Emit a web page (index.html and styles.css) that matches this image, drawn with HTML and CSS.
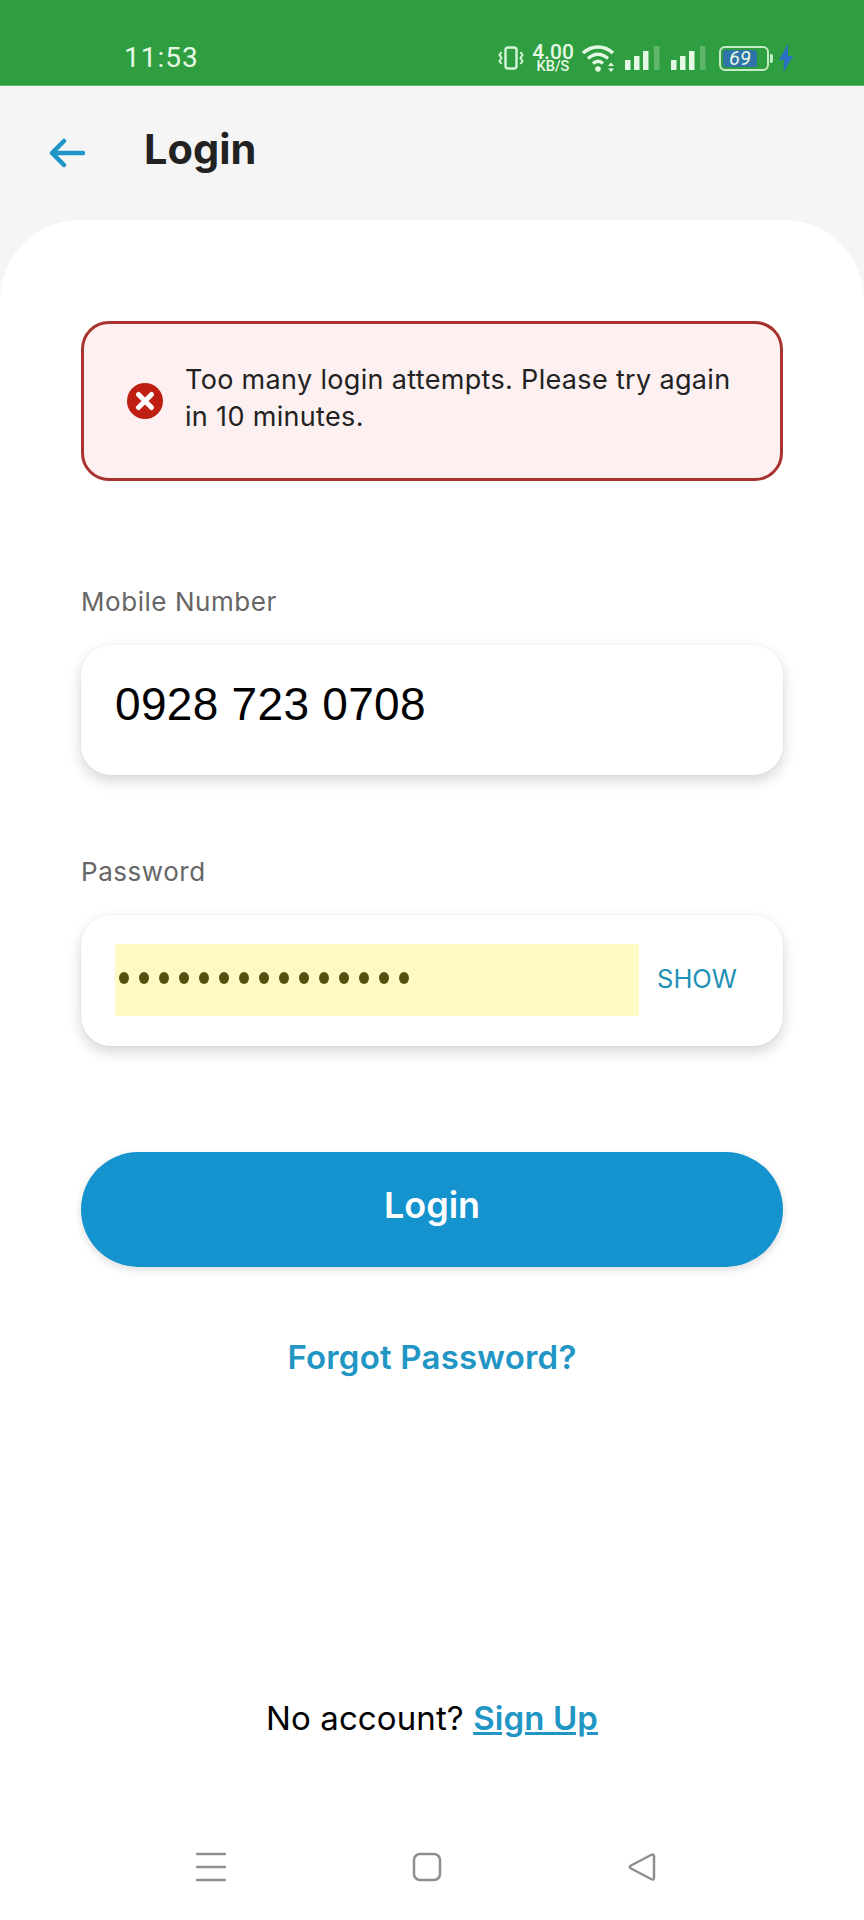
FILE: index.html
```html
<!DOCTYPE html>
<html lang="en">
<head>
<meta charset="utf-8">
<title>Login</title>
<link rel="stylesheet" href="styles.css">
</head>
<body>
<div class="app">
  <div class="statusbar">
    <span class="clock">11:53</span>
    <div class="status-icons">
      <svg class="ic-vib" viewBox="0 0 26 24"><rect x="7.500" y="1.500" width="11" height="21" rx="2.500" fill="none" stroke="#d6f5d8" stroke-width="2.400"/><path d="M3.500 6 1.500 9l2 3-2 3 2 3M22.500 6l2 3-2 3 2 3-2 3" fill="none" stroke="#d6f5d8" stroke-width="2"/></svg>
      <div class="speed"><span class="speed-num">4.00</span><span class="speed-unit">KB/S</span></div>
      <svg class="ic-wifi" viewBox="0 0 36 28"><path d="M2 9C11 1 23 1 32 9M7 14.500c6.500-5.500 13.500-5.500 20 0M12 19.500c3.500-3 6.500-3 10 0" fill="none" stroke="#e4f8e4" stroke-width="3.400"/><circle cx="17" cy="25" r="2.800" fill="#e4f8e4"/><path d="M30 18.500l3 3.500h-6zM30 28l3-3.500h-6z" fill="#e4f8e4"/></svg>
      <svg class="ic-sig" viewBox="0 0 35 24"><rect x="0" y="14" width="5.500" height="10" fill="#e4f8e4"/><rect x="9" y="10" width="5.500" height="14" fill="#e4f8e4"/><rect x="18" y="5" width="5.500" height="19" fill="#e4f8e4"/><rect x="29" y="0" width="5.500" height="24" fill="#5fb56b"/></svg>
      <svg class="ic-sig ic-sig-last" viewBox="0 0 35 24"><rect x="0" y="14" width="5.500" height="10" fill="#e4f8e4"/><rect x="9" y="10" width="5.500" height="14" fill="#e4f8e4"/><rect x="18" y="5" width="5.500" height="19" fill="#e4f8e4"/><rect x="29" y="0" width="5.500" height="24" fill="#5fb56b"/></svg>
      <div class="battery"><span class="battery-fill">69</span></div>
      <svg class="ic-bolt" viewBox="0 0 14 28"><path d="M9 0 0 16h5L4.500 28 14 12H9z" fill="#2a6fc4"/></svg>
    </div>
  </div>

  <header class="topbar">
    <svg class="back" viewBox="0 0 36 30"><path d="M34 15H4M15 3 3 15l12 12" fill="none" stroke="#2096c8" stroke-width="4.500" stroke-linecap="round" stroke-linejoin="round"/></svg>
    <h1 class="title">Login</h1>
  </header>

  <main class="card">
    <div class="alert">
      <svg class="alert-icon" viewBox="0 0 36 36"><circle cx="18" cy="18" r="18" fill="#bf1f12"/><path d="M11.500 11.500l13 13M24.500 11.500l-13 13" stroke="#fff" stroke-width="5" stroke-linecap="round"/></svg>
      <p class="alert-text">Too many login attempts. Please try again in 10 minutes.</p>
    </div>

    <label class="label label-mobile">Mobile Number</label>
    <div class="field field-phone"><span class="phone">0928 723 0708</span></div>

    <label class="label label-pass">Password</label>
    <div class="field field-pass">
      <div class="autofill">
        <span class="dots"><i></i><i></i><i></i><i></i><i></i><i></i><i></i><i></i><i></i><i></i><i></i><i></i><i></i><i></i><i></i></span>
      </div>
      <span class="show">SHOW</span>
    </div>

    <button class="btn">Login</button>
    <a class="forgot">Forgot Password?</a>

    <p class="signup">No account? <a class="signup-link">Sign Up</a></p>

    <nav class="navbar">
      <svg class="nav-menu" viewBox="0 0 30 30"><path d="M1 2h28M1 15h28M1 28h28" stroke="#8e8e8e" stroke-width="2.500" stroke-linecap="round"/></svg>
      <svg class="nav-home" viewBox="0 0 30 30"><rect x="2" y="2" width="26" height="26" rx="6" fill="none" stroke="#8e8e8e" stroke-width="2.500"/></svg>
      <svg class="nav-back" viewBox="0 0 30 30"><path d="M27 4.500v21q0 3-3 1.500L4 16.500q-2.500-1.500 0-3L24 3q3-1.500 3 1.500z" fill="none" stroke="#8e8e8e" stroke-width="2.500"/></svg>
    </nav>
  </main>
</div>
</body>
</html>
```
FILE: styles.css
```css
* { box-sizing: border-box; }
html, body { margin: 0; padding: 0; }
body { font-family: "Inter", "Noto Sans", sans-serif; background: #f5f5f6; }
.app { width: 864px; height: 1920px; display: flex; flex-direction: column; overflow: hidden; }

.statusbar { height: 86px; flex: none; background: #2f9e41; border-bottom: 1px solid #63b86f; display: flex; align-items: flex-end; padding: 0 0 11px 124px; color: #e6f8e6; }
.clock { font-family: "Roboto", sans-serif; font-size: 28px; line-height: 32px; letter-spacing: 1px; width: 374px; }
.status-icons { display: flex; align-items: center; height: 32px; }
.ic-vib { width: 26px; height: 24px; margin-right: 9px; flex: none; }
.speed { display: flex; flex-direction: column; align-items: center; width: 40px; font-family: "Roboto", sans-serif; font-weight: 500; color: #e6f8e6; margin-right: 8px; flex: none; }
.speed-num { font-size: 21px; line-height: 18px; }
.speed-unit { font-size: 14.500px; line-height: 12px; }
.ic-wifi { width: 36px; height: 28px; margin-right: 8px; flex: none; }
.ic-sig { width: 35px; height: 24px; margin-right: 11px; flex: none; }
.ic-sig-last { margin-right: 13px; }
.battery { width: 50px; height: 25px; border: 2px solid #c4ecc6; border-radius: 6px; padding: 2px; position: relative; flex: none; }
.battery::after { content: ""; position: absolute; right: -6px; top: 6px; width: 3px; height: 9px; background: #c4ecc6; border-radius: 0 2px 2px 0; }
.battery-fill { display: block; width: 34px; height: 17px; background: #2e74a8; border-radius: 3px; color: #e6f8e6; font-family: "Roboto", sans-serif; font-style: italic; font-size: 20px; line-height: 17px; text-align: center; white-space: nowrap; }
.ic-bolt { width: 14px; height: 28px; margin-left: 10px; flex: none; }

.topbar { height: 134px; flex: none; display: flex; align-items: flex-start; padding: 39px 0 0 49px; }
.back { width: 36px; height: 30px; margin-top: 13px; }
.title { margin: -4px 0 0 59px; font-size: 41.500px; line-height: 56px; font-weight: 700; color: #222; }

.card { flex: 1; background: #fff; border-radius: 80px 80px 0 0; padding: 101px 81px 0; display: flex; flex-direction: column; }

.alert { height: 160px; border: 3px solid #a8322d; border-radius: 28px; background: #fcf0f0; display: flex; align-items: center; padding: 0 30px 0 43px; flex: none; }
.alert-icon { width: 36px; height: 36px; flex: none; }
.alert-text { margin: -7px 0 0 22px; font-size: 27px; line-height: 37px; color: #222; letter-spacing: .33px; }

.label { font-size: 26px; line-height: 36px; color: #666; display: block; letter-spacing: .55px; }
.label-mobile { margin-top: 103px; }
.label-pass { margin-top: 79px; }
.field { margin-top: 25px; border-radius: 30px; background: #fff; box-shadow: 0 6px 14px rgba(0,0,0,.16), 0 0 3px rgba(0,0,0,.05); display: flex; align-items: center; padding: 0 34px; flex: none; }
.field-phone { height: 130px; }
.phone { font-family: "Liberation Sans", sans-serif; font-size: 46px; line-height: 52px; color: #000; margin-top: -13px; letter-spacing: .3px; }
.field-pass { height: 131px; justify-content: space-between; padding-right: 46px; }
.autofill { width: 524px; height: 72px; background: #fefac4; display: flex; align-items: center; padding-left: 4px; margin-top: -1px; }
.dots { display: flex; gap: 10px; margin-top: -4px; }
.dots i { display: block; width: 10px; height: 12px; border-radius: 50%; background: #55500f; }
.show { font-size: 25.500px; color: #2091b5; margin-top: -4px; }

.btn { margin-top: 106px; height: 115px; flex: none; border: 0; border-radius: 58px; background: #1493cf; color: #fff; font: 600 36px/1 "Inter", sans-serif; padding: 0 0 9px; box-shadow: 0 3px 8px rgba(0,0,0,.14); }
.forgot { margin-top: 68px; text-align: center; font-size: 33px; line-height: 44px; font-weight: 600; color: #2196c4; letter-spacing: .2px; }

.signup { margin: 317px 0 0; text-align: center; font-size: 33px; line-height: 44px; color: #000; letter-spacing: .1px; }
.signup-link { color: #2196c4; font-weight: 600; text-decoration: underline; }

.navbar { position: relative; flex: 1; }
.navbar svg { position: absolute; top: 112px; height: 30px; }
.nav-menu { left: 115px; width: 30px; }
.nav-home { left: 331px; width: 30px; }
.nav-back { left: 546px; width: 30px; }
```
